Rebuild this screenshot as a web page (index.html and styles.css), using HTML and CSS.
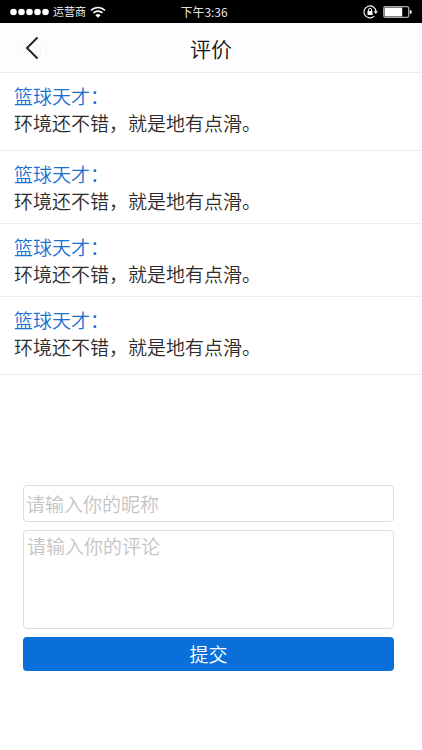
FILE: index.html
```html
<!DOCTYPE html>
<html lang="zh-CN">
<head>
  <meta charset="UTF-8">
  <meta name="viewport" content="width=device-width, initial-scale=1.0">
  <title>评价</title>
  <link rel="stylesheet" href="styles.css">
</head>
<body>
  <div class="status">
    <div class="status-left">
      <svg width="39" height="8" viewBox="0 0 39 8" fill="#fff">
        <circle cx="3.5" cy="4" r="3.3"/>
        <circle cx="11.5" cy="4" r="3.3"/>
        <circle cx="19.5" cy="4" r="3.3"/>
        <circle cx="27.5" cy="4" r="3.3"/>
        <circle cx="35.5" cy="4" r="3.3"/>
      </svg>
      <span class="carrier">运营商</span>
      <svg width="16" height="12" viewBox="0 0 16 12" fill="none" stroke="#fff" stroke-width="1.6">
        <path d="M1 4.4a10 10 0 0 1 14 0"/>
        <path d="M3.4 7a6.6 6.6 0 0 1 9.2 0"/>
        <path d="M8 11.8L5.4 9.2a3.7 3.7 0 0 1 5.2 0z" fill="#fff" stroke="none"/>
      </svg>
    </div>
    <span class="time">下午3:36</span>
    <div class="status-right">
      <svg width="15" height="14" viewBox="0 0 15 14" fill="none" stroke="#fff">
        <path d="M11.2 11.2a6 6 0 1 1 1.8-4.6" stroke-width="1.1"/>
        <path d="M10.8 6.2h4L12.8 9z" fill="#fff" stroke="none"/>
        <rect x="4.5" y="6" width="5" height="4" fill="#fff" stroke="none"/>
        <path d="M5.4 6.2V5a1.6 1.6 0 0 1 3.2 0v1.2"/>
      </svg>
      <svg width="29" height="12" viewBox="0 0 29 12">
        <rect x=".7" y=".7" width="25" height="10.6" rx="1.5" fill="none" stroke="#aaa" stroke-width="1.2"/>
        <rect x="1.6" y="1.6" width="17.6" height="8.8" fill="#fff"/>
        <path d="M26.8 4a2 2 0 0 1 0 4z" fill="#fff"/>
      </svg>
    </div>
  </div>

  <header class="header">
    <a class="back" href="#" aria-label="返回">
      <span class="back-text">评价</span>
      <svg class="back-icon" width="14" height="24" viewBox="0 0 14 24" fill="none" stroke="#24242e" stroke-width="2">
        <path d="M12.5 1.5L2 12l10.5 10.5"/>
      </svg>
    </a>
    <h1>评价</h1>
  </header>

  <ul class="comments">
    <li class="loose">
      <div class="name">篮球天才：</div>
      <div class="text">环境还不错，就是地有点滑。</div>
    </li>
    <li>
      <div class="name">篮球天才：</div>
      <div class="text">环境还不错，就是地有点滑。</div>
    </li>
    <li>
      <div class="name">篮球天才：</div>
      <div class="text">环境还不错，就是地有点滑。</div>
    </li>
    <li class="loose">
      <div class="name">篮球天才：</div>
      <div class="text">环境还不错，就是地有点滑。</div>
    </li>
  </ul>

  <form class="form">
    <input type="text" name="nickname" placeholder="请输入你的昵称" aria-label="昵称">
    <textarea name="comment" placeholder="请输入你的评论" aria-label="评论"></textarea>
    <button type="submit">提交</button>
  </form>
</body>
</html>
```
FILE: styles.css
```css
* { box-sizing:border-box; }
body { margin:0; background:#fff; color:#2b2b2b; font-family:"Noto Sans CJK SC", sans-serif; font-size:19px; font-weight:350; }

.status { display:grid; grid-template-columns:1fr auto 1fr; align-items:center; height:23px; padding:0 10px; background:#000; color:#fff; font-size:12px; line-height:23px; }
.status-left, .status-right { display:flex; align-items:center; gap:4px; }
.status-right { justify-content:flex-end; gap:5px; }
.carrier { font-size:11px; }
.time { padding-right:14px; }

.header { display:grid; grid-template-columns:1fr auto 1fr; align-items:center; height:50px; padding:0 14px; background:#fefdfe; border-bottom:1px solid #ebebeb; }
.header h1 { margin:0; color:#111; font-size:21px; font-weight:350; line-height:30px; }
.back { display:grid; justify-self:start; place-items:center; text-decoration:none; }
.back-text, .back-icon { grid-area:1 / 1; }
.back-text { color:#f8f5f6; font-size:18px; line-height:24px; }

.comments { margin:0; padding:0; list-style:none; }
.comments li { padding:9px 14px; border-bottom:1px solid #ececec; line-height:27px; }
.comments .loose { padding-bottom:14px; }
.name { color:#1a6fd0; }

.form { display:flex; flex-direction:column; gap:8px; margin:110px 28px 0 23px; }
.form input, .form textarea, .form button { width:100%; border-radius:4px; font-family:inherit; font-size:19px; font-weight:350; }
.form input, .form textarea { padding:0 2px; border:1px solid #dcdcde; background:#fff; color:#2b2b2b; }
.form input { height:37px; }
.form textarea { display:block; height:99px; padding:1px 3px; line-height:28px; resize:none; }
.form ::placeholder { color:#c4c4c4; }
.form button { height:34px; padding:0; border:0; background:#0a6fdb; color:#fff; line-height:34px; }
```
